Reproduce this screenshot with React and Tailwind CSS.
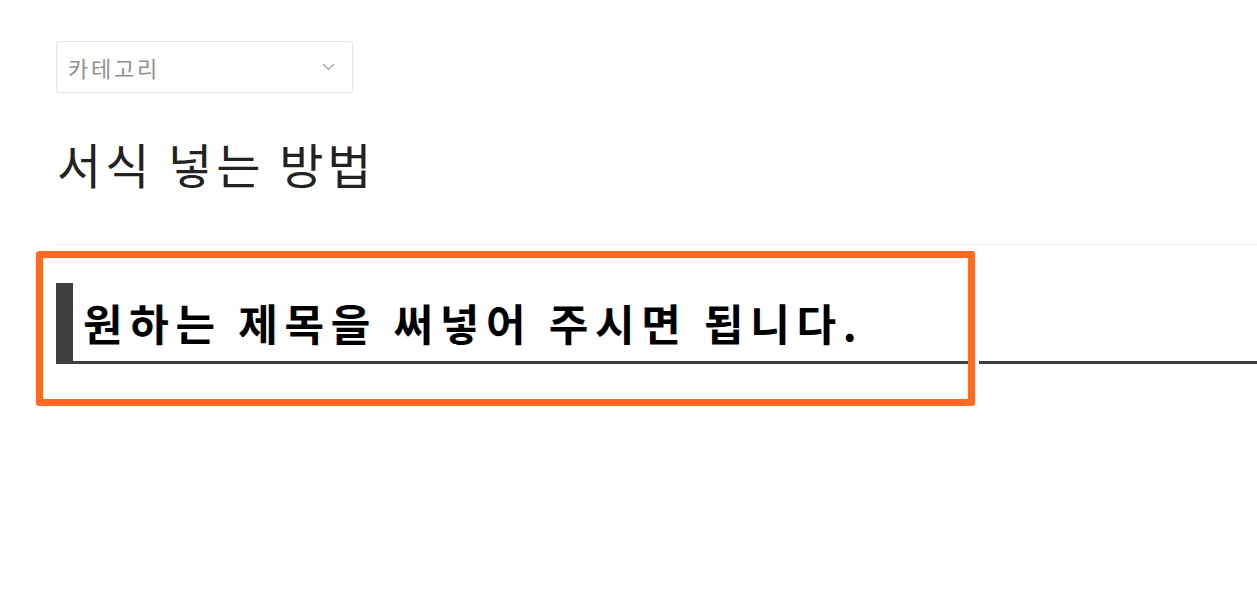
import React from "react";

const App = () => {
  return (
    <div
      className="relative min-h-[600px] bg-white pl-[56px] pt-[41px]"
      style={{ fontFamily: '"Noto Sans CJK KR", "Noto Sans", sans-serif' }}
    >
      {/* category select */}
      <div className="flex h-[52px] w-[297px] items-center justify-between rounded-[3px] border border-[#e6e6e6] pl-[11px] pr-[17px]">
        <span className="text-[22px] tracking-[2.8px] text-[#8f8f8f]">카테고리</span>
        <svg width="13" height="8" viewBox="0 0 13 8" fill="none">
          <path d="M1 1l5.5 5.5L12 1" stroke="#9a9a9a" strokeWidth="1.2" />
        </svg>
      </div>

      <h1 className="mt-[40px] pl-[1px] text-[48px] leading-[60px] tracking-[4px] font-normal text-[#222]">
        서식 넣는 방법
      </h1>

      <div className="mt-[51px] border-t border-[#ececec] pt-[38px]">
        <h2 className="border-b-[3px] border-l-[17px] border-[#404040] pl-[10px] text-[43px] leading-[78px] font-bold tracking-[6.7px] text-black">
          원하는 제목을 써넣어 주시면 됩니다.
        </h2>
      </div>

      {/* highlight annotation */}
      <div className="absolute left-[36px] top-[251px] h-[155px] w-[939px] rounded-[3px] border-[7px] border-[#ff6a22] shadow-[0_0_0_4px_#fff]" />
    </div>
  );
};

export default App;
